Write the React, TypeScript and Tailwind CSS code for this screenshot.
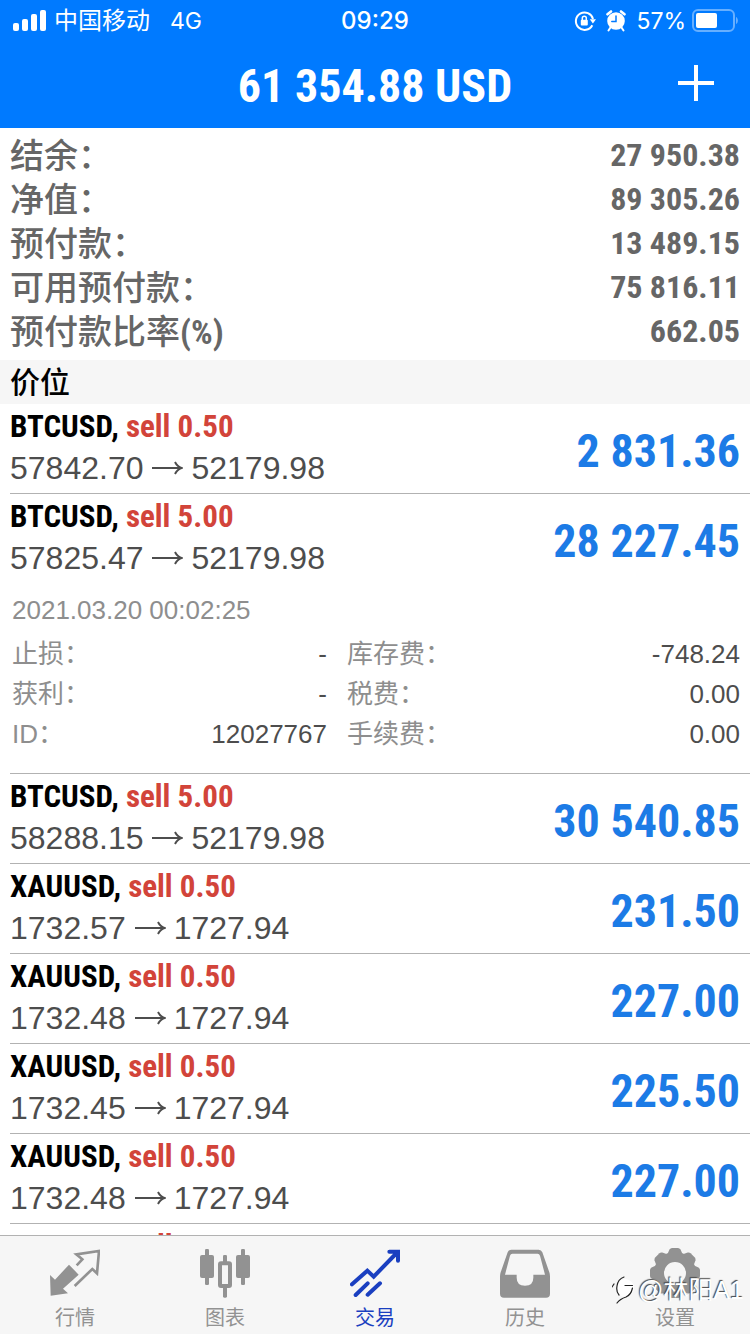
const num = "font-['Roboto_Condensed','Liberation_Sans_Narrow','Liberation_Sans',sans-serif] font-bold"

const balances = [
  { label: "结余：", value: "27 950.38" },
  { label: "净值：", value: "89 305.26" },
  { label: "预付款：", value: "13 489.15" },
  { label: "可用预付款：", value: "75 816.11" },
  { label: "预付款比率", unit: "(%)", value: "662.05" },
]

const positions = [
  { id: 1, symbol: "BTCUSD", lots: "0.50", open: "57842.70", price: "52179.98", profit: "2 831.36" },
  {
    id: 2, symbol: "BTCUSD", lots: "5.00", open: "57825.47", price: "52179.98", profit: "28 227.45",
    details: {
      time: "2021.03.20 00:02:25",
      rows: [
        ["止损：", "-", "库存费：", "-748.24"],
        ["获利：", "-", "税费：", "0.00"],
        ["ID：", "12027767", "手续费：", "0.00"],
      ],
    },
  },
  { id: 3, symbol: "BTCUSD", lots: "5.00", open: "58288.15", price: "52179.98", profit: "30 540.85" },
  { id: 4, symbol: "XAUUSD", lots: "0.50", open: "1732.57", price: "1727.94", profit: "231.50" },
  { id: 5, symbol: "XAUUSD", lots: "0.50", open: "1732.48", price: "1727.94", profit: "227.00" },
  { id: 6, symbol: "XAUUSD", lots: "0.50", open: "1732.45", price: "1727.94", profit: "225.50" },
  { id: 7, symbol: "XAUUSD", lots: "0.50", open: "1732.48", price: "1727.94", profit: "227.00" },
  { id: 8, symbol: "XAUUSD", lots: "0.50" },
]

function StatusBar() {
  return (
    <div className="grid h-10 grid-cols-3 items-center px-3 pt-0.5 font-[Inter,'Noto_Sans_CJK_SC',sans-serif] text-[23px]">
      <div className="flex items-center">
        <svg viewBox="0 0 34 22" className="mr-2 h-[22px] w-[34px]" fill="currentColor" aria-hidden="true">
          <rect x="1" y="13" width="6" height="8" rx="2" />
          <rect x="10" y="9" width="6" height="12" rx="2" />
          <rect x="19" y="4" width="6" height="17" rx="2" />
          <rect x="28" y="0" width="6" height="21" rx="2" />
        </svg>
        <span className="text-2xl">中国移动</span>
        <span className="ml-5">4G</span>
      </div>
      <div className="text-center text-2xl font-medium">09:29</div>
      <div className="flex items-center justify-end">
        <svg viewBox="0 0 22 22" className="mr-2.5 size-[22px]" fill="none" stroke="currentColor" strokeWidth="2" aria-hidden="true">
          <path d="M18.3 15.2A8.7 8.7 0 1 1 19 9" />
          <path d="M15.8 9.2h6.2l-3.1 4.3z" fill="currentColor" stroke="none" />
          <rect x="6.8" y="9.8" width="7" height="5.8" rx="1" fill="currentColor" stroke="none" />
          <path d="M8.3 10V8.2a2 2 0 0 1 4 0V10" strokeWidth="1.5" />
        </svg>
        <svg viewBox="0 0 20 22" className="mr-2.5 h-[22px] w-5" fill="none" stroke="currentColor" strokeLinecap="round" aria-hidden="true">
          <circle cx="10" cy="11" r="8.8" fill="currentColor" stroke="none" />
          <path d="M1.5 4.3 5 1.5M18.5 4.3 15 1.5" strokeWidth="2.6" />
          <path d="M4.5 17.5 2.5 20.5M15.5 17.5l2 3" strokeWidth="2" />
          <path d="M10 6v5.500H5.8" stroke="#007aff" strokeWidth="1.5" />
        </svg>
        <span className="mr-1.5">57%</span>
        <svg viewBox="0 0 46 24" className="h-6 w-[46px]" aria-hidden="true">
          <rect x="1" y="1" width="41" height="21" rx="5" fill="none" stroke="#fff" strokeOpacity=".4" strokeWidth="2" />
          <rect x="4" y="4" width="21" height="15" rx="2" fill="#fff" />
          <path d="M44 8c2.500 1 2.500 6 0 7z" fill="#fff" fillOpacity=".4" />
        </svg>
      </div>
    </div>
  )
}

function Arrow() {
  return (
    <svg viewBox="0 0 32 16" className="h-4 w-8" fill="none" stroke="currentColor" strokeWidth="2" role="img" aria-label="→">
      <path d="M1 8h29M24 2c1.500 3 3.500 5 6.500 6-3 1-5 3-6.500 6" />
    </svg>
  )
}

function Position({ p }: { p: any }) {
  return (
    <li className="ml-2.5 border-b border-[#b2b2b2] pr-2.5">
      <div className="flex h-[89px] items-center justify-between">
        <div className="self-start pt-0.5">
          <div className={num + " text-[31px] leading-[42px] text-black"}>
            {p.symbol}, <span className="text-[#d2443a]">sell {p.lots}</span>
          </div>
          {p.open && (
            <div className="flex items-center gap-2 text-[32px] leading-10 text-[#4d4d4d]">
              <span>{p.open}</span>
              <Arrow />
              <span>{p.price}</span>
            </div>
          )}
        </div>
        {p.profit && <div className={num + " pt-1 text-[46px] leading-none text-[#1c7be6]"}>{p.profit}</div>}
      </div>
      {p.details && (
        <div className="pt-[7px] pb-[19px] pl-0.5 text-[26px] leading-10 text-[#4d4d4d]">
          <div className="mb-1 text-[#8e8e8e]">{p.details.time}</div>
          {p.details.rows.map((r: string[]) => (
            <div key={r[0]} className="grid h-10 grid-cols-[315fr_393fr] gap-5">
              <div className="flex justify-between"><span className="text-[#8e8e8e]">{r[0]}</span><span>{r[1]}</span></div>
              <div className="flex justify-between"><span className="text-[#8e8e8e]">{r[2]}</span><span>{r[3]}</span></div>
            </div>
          ))}
        </div>
      )}
    </li>
  )
}

const tabs = [
  {
    label: "行情",
    icon: (
      <svg viewBox="0 0 150 147" className="h-[49px] w-[50px]">
        <path d="M0 78 15 92 57 47 86 77 39 119 54 133 2 140z" fill="currentColor" />
        <path d="M80 49 97 31 79 16 147 6 141 73 127 60 74 111" fill="none" stroke="currentColor" strokeWidth="8" />
      </svg>
    ),
  },
  {
    label: "图表",
    icon: (
      <svg viewBox="0 0 150 147" className="h-[49px] w-[50px]" fill="currentColor">
        <rect x="0" y="18" width="42" height="69" rx="6" />
        <rect x="15" y="0" width="12" height="108" rx="4" />
        <rect x="69" y="18" width="12" height="25" rx="4" />
        <rect x="69" y="112" width="12" height="34" rx="4" />
        <rect x="60" y="43" width="30" height="68" rx="3" fill="none" stroke="currentColor" strokeWidth="12" />
        <rect x="108" y="18" width="42" height="69" rx="6" />
        <rect x="123" y="0" width="12" height="108" rx="4" />
      </svg>
    ),
  },
  {
    label: "交易",
    active: true,
    icon: (
      <svg viewBox="0 0 150 147" className="h-[49px] w-[50px]" fill="none" stroke="currentColor" strokeWidth="12" strokeLinecap="round">
        <path d="M6 106 52 65 71 83 143 9M118 8h26v27M17 138 53 103M53 137 90 103" />
      </svg>
    ),
  },
  {
    label: "历史",
    icon: (
      <svg viewBox="0 0 150 147" className="h-[49px] w-[50px]" fill="currentColor" fillRule="evenodd">
        <path d="M34 2H116Q124 2 127 10L148 70Q150 76 150 82V134Q150 146 138 146H12Q0 146 0 134V82Q0 76 2 70L23 10Q26 2 34 2zM37 14Q32 14 30 20L15 77H50V86Q50 110 75 110T100 86V77H135L120 20Q118 14 113 14z" />
      </svg>
    ),
  },
  {
    label: "设置",
    icon: (
      <svg viewBox="0 0 50 50" className="size-[50px]" fill="none" stroke="currentColor">
        <circle cx="25" cy="25" r="16" strokeWidth="10" />
        {[0, 45, 90, 135, 180, 225, 270, 315].map(a => (
          <path key={a} d="M17 7 19.500 1.500Q20.500 0 22 0h6Q29.500 0 30.500 1.500L33 7z" fill="currentColor" stroke="none" transform={`rotate(${a} 25 25)`} />
        ))}
      </svg>
    ),
  },
]

export default function App() {
  return (
    <div className="relative flex h-screen flex-col overflow-hidden bg-white font-['Liberation_Sans','Noto_Sans_CJK_SC',sans-serif]">
      <header className="shrink-0 bg-[#007aff] text-white">
        <StatusBar />
        <div className="grid h-[88px] grid-cols-[1fr_auto_1fr] items-center px-8">
          <h1 className={num + " col-start-2 pt-1 text-[46px] leading-none"}>61 354.88 USD</h1>
          <button className="justify-self-end" aria-label="新订单">
            <svg viewBox="0 0 44 44" className="size-11" stroke="currentColor" strokeWidth="4">
              <path d="M4 21h36M22 3v36" />
            </svg>
          </button>
        </div>
      </header>

      <main className="min-h-0 flex-1 overflow-hidden">
        <dl className="px-2.5 py-1.5 text-[34px] text-[#666]">
          {balances.map(b => (
            <div key={b.label} className="flex h-11 justify-between">
              <dt className="leading-[44px] font-medium">{b.label}{b.unit && <span className={num}>{b.unit}</span>}</dt>
              <dd className={num + " text-[32px] leading-[42px]"}>{b.value}</dd>
            </div>
          ))}
        </dl>
        <h2 className="h-11 bg-[#f6f6f6] px-2.5 text-[30px] leading-[46px] font-medium text-black">价位</h2>
        <ul>
          {positions.map(p => <Position key={p.id} p={p} />)}
        </ul>
      </main>

      <nav className="grid shrink-0 grid-cols-5 border-t border-[#b2b2b2] bg-[#f6f6f6] pt-3 pb-0.5">
        {tabs.map(t => (
          <a key={t.label} href="#" className={"flex flex-col items-center gap-1.5 text-xl leading-7 " + (t.active ? "text-[#1a3fc0]" : "text-[#929292]")}>
            <span className="flex h-[50px] items-center">{t.icon}</span>
            {t.label}
          </a>
        ))}
      </nav>

      <div className="absolute right-1.5 bottom-7 flex items-center gap-1 text-[25px] leading-8 text-white [text-shadow:-1px_-1px_1px_#444]">
        <svg viewBox="0 0 22 30" className="h-[30px] w-[22px]" fill="none" strokeLinecap="round" aria-hidden="true">
          <circle cx="13" cy="13" r="9" fill="#fff" />
          <path d="M0 12 2 9M12 2Q6 4 5 11Q4 17 7 20M13 10.500H20.500M20.500 13Q19 20 14 22Q8 24 5 28" stroke="#222" strokeWidth="1.2" />
        </svg>
        @林阳A1
      </div>
    </div>
  )
}
